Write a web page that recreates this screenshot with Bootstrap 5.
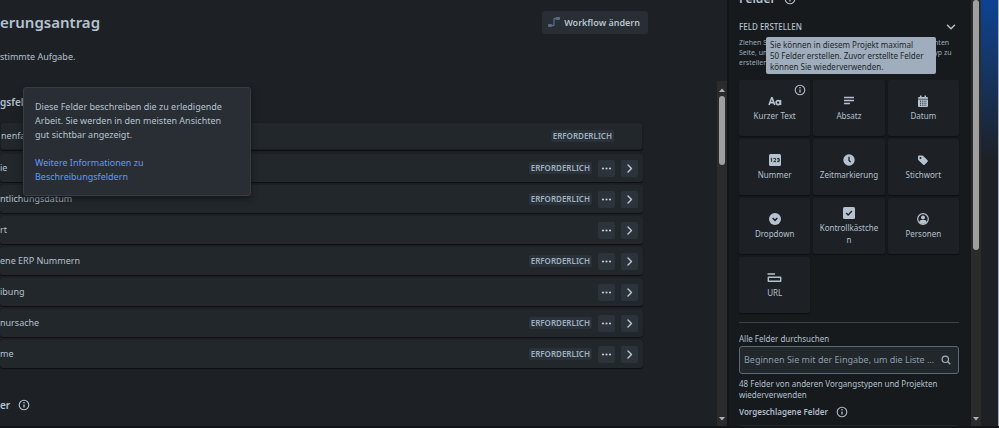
<!DOCTYPE html>
<html lang="de" data-bs-theme="dark">
<head>
<meta charset="utf-8">
<meta name="viewport" content="width=device-width, initial-scale=1">
<title>Felder konfigurieren</title>
<link href="https://cdn.jsdelivr.net/npm/bootstrap@5.3.0/dist/css/bootstrap.min.css" rel="stylesheet">
<style>
body{font-family:"Noto Sans","Open Sans",sans-serif;font-size:9px;line-height:14px;background:#1d2125;color:#b4c0cd}
svg{display:block;flex:none}
.page-title{font-size:15px;line-height:24px;font-weight:600;color:#b6c2cf}
.btn-flow{background:#282e33;color:#b6c2cf;font-size:9px;line-height:15px;font-weight:600;border:0;border-radius:3px;padding:4px 8px 4px 6px}
.btn-flow:hover{background:#333b43}
.app-shell{border-bottom:2px solid #131619}
.intro-head{padding:10px 79px 0 0}
.intro-text{padding-top:16px;padding-bottom:17px}
.scroll-body{padding-right:74px}
.section-title{font-size:10px;line-height:16px;font-weight:600;color:#b6c2cf}
.list-title{padding:13px 0 12px;margin:0}
.next-title{padding-top:29px;margin:0}
.field-list{gap:3px}
.field-item{height:28px;background:#22272b;border-radius:3px;box-shadow:0 1px 1px #0d1013;padding-right:5px;gap:6px}
.field-item.is-fixed{border:1px solid #1a1e21;margin-bottom:1px;padding-right:28px}
.required-tag{background:#2a3138;color:#9fb0c0;font-size:8px;line-height:12px;font-weight:600;border-radius:2px;padding:0 2px}
.btn-tool{width:17px;height:17px;background:#2c333a;border:0;border-radius:2px;padding:0;color:#c0cad6}
.bar{width:10px;flex:none;background:#2b2b2b;padding:7px 2px 5px}
.bar .thumb{background:#9f9f9f;border-radius:3px;width:6px}
.bar-side{padding-top:0}
.info-pop{left:23px;top:87px;width:228px;background:#282e33;border:1px solid #363d43;border-radius:3px;box-shadow:0 3px 6px #0d1013aa;padding:12px 11px 11px;color:#b6c2cf;z-index:3}
.info-pop p{margin-bottom:14px}
.info-pop a{color:#579dff;text-decoration:none}
.side{width:272px}
.side-body{min-width:0;background:#161a1d;padding:0 12px 0 10px;border-left:2px solid #121517}
.side-title{font-size:12px;line-height:16px;font-weight:600;margin-top:-9px;color:#b6c2cf}
.side-toggle{font-size:8px;line-height:14px;font-weight:500;color:#b6c2cf;background:none;border:0;padding:0 3px 0 0;margin-top:13px}
.side-note{font-size:7px;line-height:10px;color:#9dacbb;padding-top:4px;margin-bottom:12px;white-space:nowrap}
.limit-tip{left:39px;top:37px;width:170px;background:#9fadbc;color:#22272b;border-radius:2px;font-size:8px;line-height:11px;padding:2px 4px;z-index:3}
.type-grid{display:grid;grid-template-columns:repeat(3,minmax(0,1fr));gap:3px}
.type-tile{height:56px;background:#1d2125;border:0;border-radius:2px;box-shadow:0 1px 1px #0d1013;color:#b4c0cd;font-size:8px;line-height:12px;padding:0 6px;gap:3px}
.tile-info{right:4px;top:4px}
.side-rule{height:1px;background:#39434b;margin:9px 0 9px}
.side-label,.side-help{font-size:8px;line-height:14px}
.side-help{line-height:11px;margin:4px 0 5px}
.search-box{background:#22272b;border:1px solid #5a6978;border-radius:3px;padding:0 7px 0 4px;height:28px;gap:4px}
.search-box input{background:none;border:0;outline:0;color:#b6c2cf;font-size:9px;padding:0;min-width:0;text-overflow:ellipsis}
.search-box input::placeholder{color:#8c9bab;opacity:1}
.suggest-title{font-size:8px;line-height:14px;font-weight:600;color:#afbcca}
.suggest-list{height:20px;background:#22272b;border-radius:3px;margin-top:6px}
.backdrop-edge{width:18px;flex:none;background:linear-gradient(#0d4293 0,#14396f 50px,#182c49 110px,#1d2125 160px);border-right:1px solid #a4acb5}
</style>
</head>
<body>
<svg class="d-none" xmlns="http://www.w3.org/2000/svg">
<symbol id="info" viewBox="0 0 12 12"><circle cx="6" cy="6" r="4.800" fill="none" stroke="currentColor" stroke-width="1.1"/><path d="M6 5.400v3.200" stroke="currentColor" stroke-width="1.300"/><circle cx="6" cy="3.700" r=".8" fill="currentColor"/></symbol>
<symbol id="dots" viewBox="0 0 17 17"><g fill="currentColor"><circle cx="5" cy="8.5" r="1.1"/><circle cx="8.5" cy="8.5" r="1.1"/><circle cx="12" cy="8.5" r="1.1"/></g></symbol>
<symbol id="next" viewBox="0 0 17 17"><path d="M7 5l3.5 3.5L7 12" fill="none" stroke="currentColor" stroke-width="1.4" stroke-linecap="round" stroke-linejoin="round"/></symbol>
<symbol id="up" viewBox="0 0 6 4"><path d="M0 4L3 .5 6 4z" fill="#b0b0b0"/></symbol>
<symbol id="down" viewBox="0 0 6 4"><path d="M0 0h6L3 3.5z" fill="#b0b0b0"/></symbol>
</svg>
<div class="app-shell d-flex vh-100 overflow-hidden position-relative">
  <main class="flex-grow-1 d-flex flex-column overflow-hidden">
    <div class="intro-head d-flex justify-content-between align-items-center">
      <h1 class="page-title m-0">erungsantrag</h1>
      <button type="button" class="btn-flow d-flex align-items-center gap-1"><svg width="12" height="12" viewBox="0 0 12 12"><g fill="none" stroke="#596b85" stroke-width="1.3"><path d="M3.5 9.5H5.2Q6 9.5 6 8.700V3.300Q6 2.500 6.800 2.500H8.500"/></g><rect x="0" y="8" width="4" height="3" rx="1" fill="#596b85"/><rect x="8" y="1" width="4" height="3" rx="1" fill="#596b85"/></svg>Workflow ändern</button>
    </div>
    <p class="intro-text m-0">stimmte Aufgabe.</p>
    <div class="d-flex flex-grow-1 overflow-hidden">
      <div class="scroll-body flex-grow-1">
        <h2 class="section-title list-title">gsfelder</h2>
        <div class="field-list d-flex flex-column">
          <div class="field-item is-fixed d-flex align-items-center"><span class="me-auto">nenfassung</span><span class="required-tag">ERFORDERLICH</span></div>
          <div class="field-item d-flex align-items-center"><span class="me-auto">ie</span><span class="required-tag">ERFORDERLICH</span><button type="button" class="btn-tool" aria-label="Mehr"><svg width="17" height="17"><use href="#dots"/></svg></button><button type="button" class="btn-tool" aria-label="Öffnen"><svg width="17" height="17"><use href="#next"/></svg></button></div>
          <div class="field-item d-flex align-items-center"><span class="me-auto">ntlichungsdatum</span><span class="required-tag">ERFORDERLICH</span><button type="button" class="btn-tool" aria-label="Mehr"><svg width="17" height="17"><use href="#dots"/></svg></button><button type="button" class="btn-tool" aria-label="Öffnen"><svg width="17" height="17"><use href="#next"/></svg></button></div>
          <div class="field-item d-flex align-items-center"><span class="me-auto">rt</span><button type="button" class="btn-tool" aria-label="Mehr"><svg width="17" height="17"><use href="#dots"/></svg></button><button type="button" class="btn-tool" aria-label="Öffnen"><svg width="17" height="17"><use href="#next"/></svg></button></div>
          <div class="field-item d-flex align-items-center"><span class="me-auto">ene ERP Nummern</span><span class="required-tag">ERFORDERLICH</span><button type="button" class="btn-tool" aria-label="Mehr"><svg width="17" height="17"><use href="#dots"/></svg></button><button type="button" class="btn-tool" aria-label="Öffnen"><svg width="17" height="17"><use href="#next"/></svg></button></div>
          <div class="field-item d-flex align-items-center"><span class="me-auto">ibung</span><button type="button" class="btn-tool" aria-label="Mehr"><svg width="17" height="17"><use href="#dots"/></svg></button><button type="button" class="btn-tool" aria-label="Öffnen"><svg width="17" height="17"><use href="#next"/></svg></button></div>
          <div class="field-item d-flex align-items-center"><span class="me-auto">nursache</span><span class="required-tag">ERFORDERLICH</span><button type="button" class="btn-tool" aria-label="Mehr"><svg width="17" height="17"><use href="#dots"/></svg></button><button type="button" class="btn-tool" aria-label="Öffnen"><svg width="17" height="17"><use href="#next"/></svg></button></div>
          <div class="field-item d-flex align-items-center"><span class="me-auto">me</span><span class="required-tag">ERFORDERLICH</span><button type="button" class="btn-tool" aria-label="Mehr"><svg width="17" height="17"><use href="#dots"/></svg></button><button type="button" class="btn-tool" aria-label="Öffnen"><svg width="17" height="17"><use href="#next"/></svg></button></div>
        </div>
        <h2 class="section-title next-title d-flex align-items-center gap-2">er <svg width="12" height="12"><use href="#info"/></svg></h2>
      </div>
      <div class="bar d-flex flex-column"><svg width="6" height="4"><use href="#up"/></svg><div class="thumb mt-1" style="height:69px"></div><svg class="mt-auto" width="6" height="4"><use href="#down"/></svg></div>
    </div>
  </main>
  <div class="info-pop position-absolute">
    <p>Diese Felder beschreiben die zu erledigende<br>Arbeit. Sie werden in den meisten Ansichten<br>gut sichtbar angezeigt.</p>
    <a href="#">Weitere Informationen zu<br>Beschreibungsfeldern</a>
  </div>
  <aside class="side d-flex flex-shrink-0 position-relative">
    <div class="side-body flex-grow-1">
      <h2 class="side-title d-flex align-items-center gap-2 mb-0">Felder <svg width="12" height="12"><use href="#info"/></svg></h2>
      <button type="button" class="side-toggle d-flex w-100 justify-content-between align-items-center">FELD ERSTELLEN <svg width="10" height="8" viewBox="0 0 10 8"><path d="M1.500 2.300L5 5.700 8.500 2.300" fill="none" stroke="currentColor" stroke-width="1.500" stroke-linecap="round"/></svg></button>
      <p class="side-note">Ziehen Sie einen Feldtyp in einen der Abschnitte auf der rechten<br>Seite, um ein benutzerdefiniertes Feld für diesen Vorgangstyp zu<br>erstellen.</p>
      <div class="type-grid">
        <button type="button" class="type-tile position-relative d-flex flex-column align-items-center justify-content-center"><svg width="14" height="12" viewBox="0 0 14 12"><g fill="none" stroke="#b6c2cf" stroke-width="1.600"><path d="M1 10L3.700 2.800H4.100L6.800 10M2.200 7.600H5.600"/><circle cx="10.200" cy="7.600" r="2"/><path d="M12.500 5V10"/></g></svg>Kurzer Text<svg class="tile-info position-absolute" width="12" height="12"><use href="#info"/></svg></button>
        <button type="button" class="type-tile d-flex flex-column align-items-center justify-content-center"><svg width="12" height="12" viewBox="0 0 12 12"><path d="M1 2.500H11M1 5.500H11M1 8.500H7" stroke="#b6c2cf" stroke-width="1.300"/></svg>Absatz</button>
        <button type="button" class="type-tile d-flex flex-column align-items-center justify-content-center"><svg width="12" height="12" viewBox="0 0 12 12"><path fill="#b6c2cf" d="M1 3a1 1 0 0 1 1-1h1V.500h1.500V2h3V.500H9V2h1a1 1 0 0 1 1 1v8a1 1 0 0 1-1 1H2a1 1 0 0 1-1-1z"/><path d="M1 4.200H11" stroke="#1d2125" stroke-width=".7"/><path d="M3 6.200H9.500M3 8.200H9.500M3 10.200H9.500" stroke="#1d2125" stroke-width="1" stroke-dasharray="1 .8"/></svg>Datum</button>
        <button type="button" class="type-tile d-flex flex-column align-items-center justify-content-center"><svg width="12" height="12" viewBox="0 0 12 12"><rect width="12" height="12" rx="1.500" fill="#b6c2cf"/><path d="M1.600 4.800L2.600 4.200V8M4.400 4.500H6.600V6L4.700 7.600H7M8 4.500H10.200V7.600H8M8.500 6H10" fill="none" stroke="#1d2125" stroke-width=".9"/></svg>Nummer</button>
        <button type="button" class="type-tile d-flex flex-column align-items-center justify-content-center"><svg width="12" height="12" viewBox="0 0 12 12"><circle cx="6" cy="6" r="5.700" fill="#b6c2cf"/><path d="M6 2.800V6.400L7.700 8.100" fill="none" stroke="#1d2125" stroke-width="1.300"/></svg>Zeitmarkierung</button>
        <button type="button" class="type-tile d-flex flex-column align-items-center justify-content-center"><svg width="12" height="12" viewBox="0 0 12 12"><path d="M1 2.500Q1 1.500 2 1.500H5.300Q5.800 1.500 6.200 1.900L10.600 6.300Q11.300 7 10.600 7.700L7.600 10.700Q6.900 11.400 6.200 10.700L1.500 6.200Q1 5.800 1 5.200z" fill="#b6c2cf"/><circle cx="3.500" cy="4" r="1" fill="#1d2125"/></svg>Stichwort</button>
        <button type="button" class="type-tile d-flex flex-column align-items-center justify-content-center"><svg width="12" height="12" viewBox="0 0 12 12"><circle cx="6" cy="6" r="6" fill="#b6c2cf"/><path d="M3.600 5L6 7.400 8.400 5" fill="none" stroke="#1d2125" stroke-width="1.500"/></svg>Dropdown</button>
        <button type="button" class="type-tile d-flex flex-column align-items-center justify-content-center"><svg width="12" height="12" viewBox="0 0 12 12"><rect width="12" height="12" rx="1.500" fill="#b6c2cf"/><path d="M3.200 5.900L5.200 7.900 8.900 4.100" fill="none" stroke="#1d2125" stroke-width="1.400"/></svg><span>Kontrollkästche<br>n</span></button>
        <button type="button" class="type-tile d-flex flex-column align-items-center justify-content-center"><svg width="12" height="12" viewBox="0 0 12 12"><circle cx="6" cy="6" r="5.300" fill="none" stroke="#b6c2cf" stroke-width="1.200"/><circle cx="6" cy="4.500" r="2" fill="#b6c2cf"/><path d="M2.300 9.300Q2.300 7.100 4.200 7.100H7.800Q9.700 7.100 9.700 9.300Q6 12.500 2.300 9.300z" fill="#b6c2cf"/></svg>Personen</button>
        <button type="button" class="type-tile d-flex flex-column align-items-center justify-content-center"><svg width="15" height="12" viewBox="0 0 15 12"><path d="M.500 2H8M1.300 5.200H13.700V9.300H1.300z" fill="none" stroke="#b6c2cf" stroke-width="1.400" stroke-linejoin="round"/></svg>URL</button>
      </div>
      <div class="side-rule"></div>
      <label class="side-label d-block" for="field-search">Alle Felder durchsuchen</label>
      <div class="search-box d-flex align-items-center"><input class="flex-grow-1" id="field-search" type="text" placeholder="Beginnen Sie mit der Eingabe, um die Liste zu filtern"><svg width="10" height="10" viewBox="0 0 10 10"><circle cx="4.300" cy="4.300" r="3.200" fill="none" stroke="#9fadbc" stroke-width="1.200"/><path d="M6.800 6.800L9.300 9.300" stroke="#9fadbc" stroke-width="1.300"/></svg></div>
      <p class="side-help">48 Felder von anderen Vorgangstypen und Projekten<br>wiederverwenden</p>
      <h3 class="suggest-title d-flex align-items-center gap-2 m-0">Vorgeschlagene Felder <svg width="12" height="12"><use href="#info"/></svg></h3>
      <div class="suggest-list"></div>
    </div>
    <div class="bar bar-side d-flex flex-column"><div class="thumb" style="height:250px"></div><svg class="mt-auto" width="6" height="4"><use href="#down"/></svg></div>
    <div class="backdrop-edge"></div>
    <div class="limit-tip position-absolute" role="tooltip">Sie können in diesem Projekt maximal<br>50&nbsp;Felder erstellen. Zuvor erstellte Felder<br>können Sie wiederverwenden.</div>
  </aside>
</div>
<script src="https://cdn.jsdelivr.net/npm/bootstrap@5.3.0/dist/js/bootstrap.bundle.min.js"></script>
</body>
</html>
